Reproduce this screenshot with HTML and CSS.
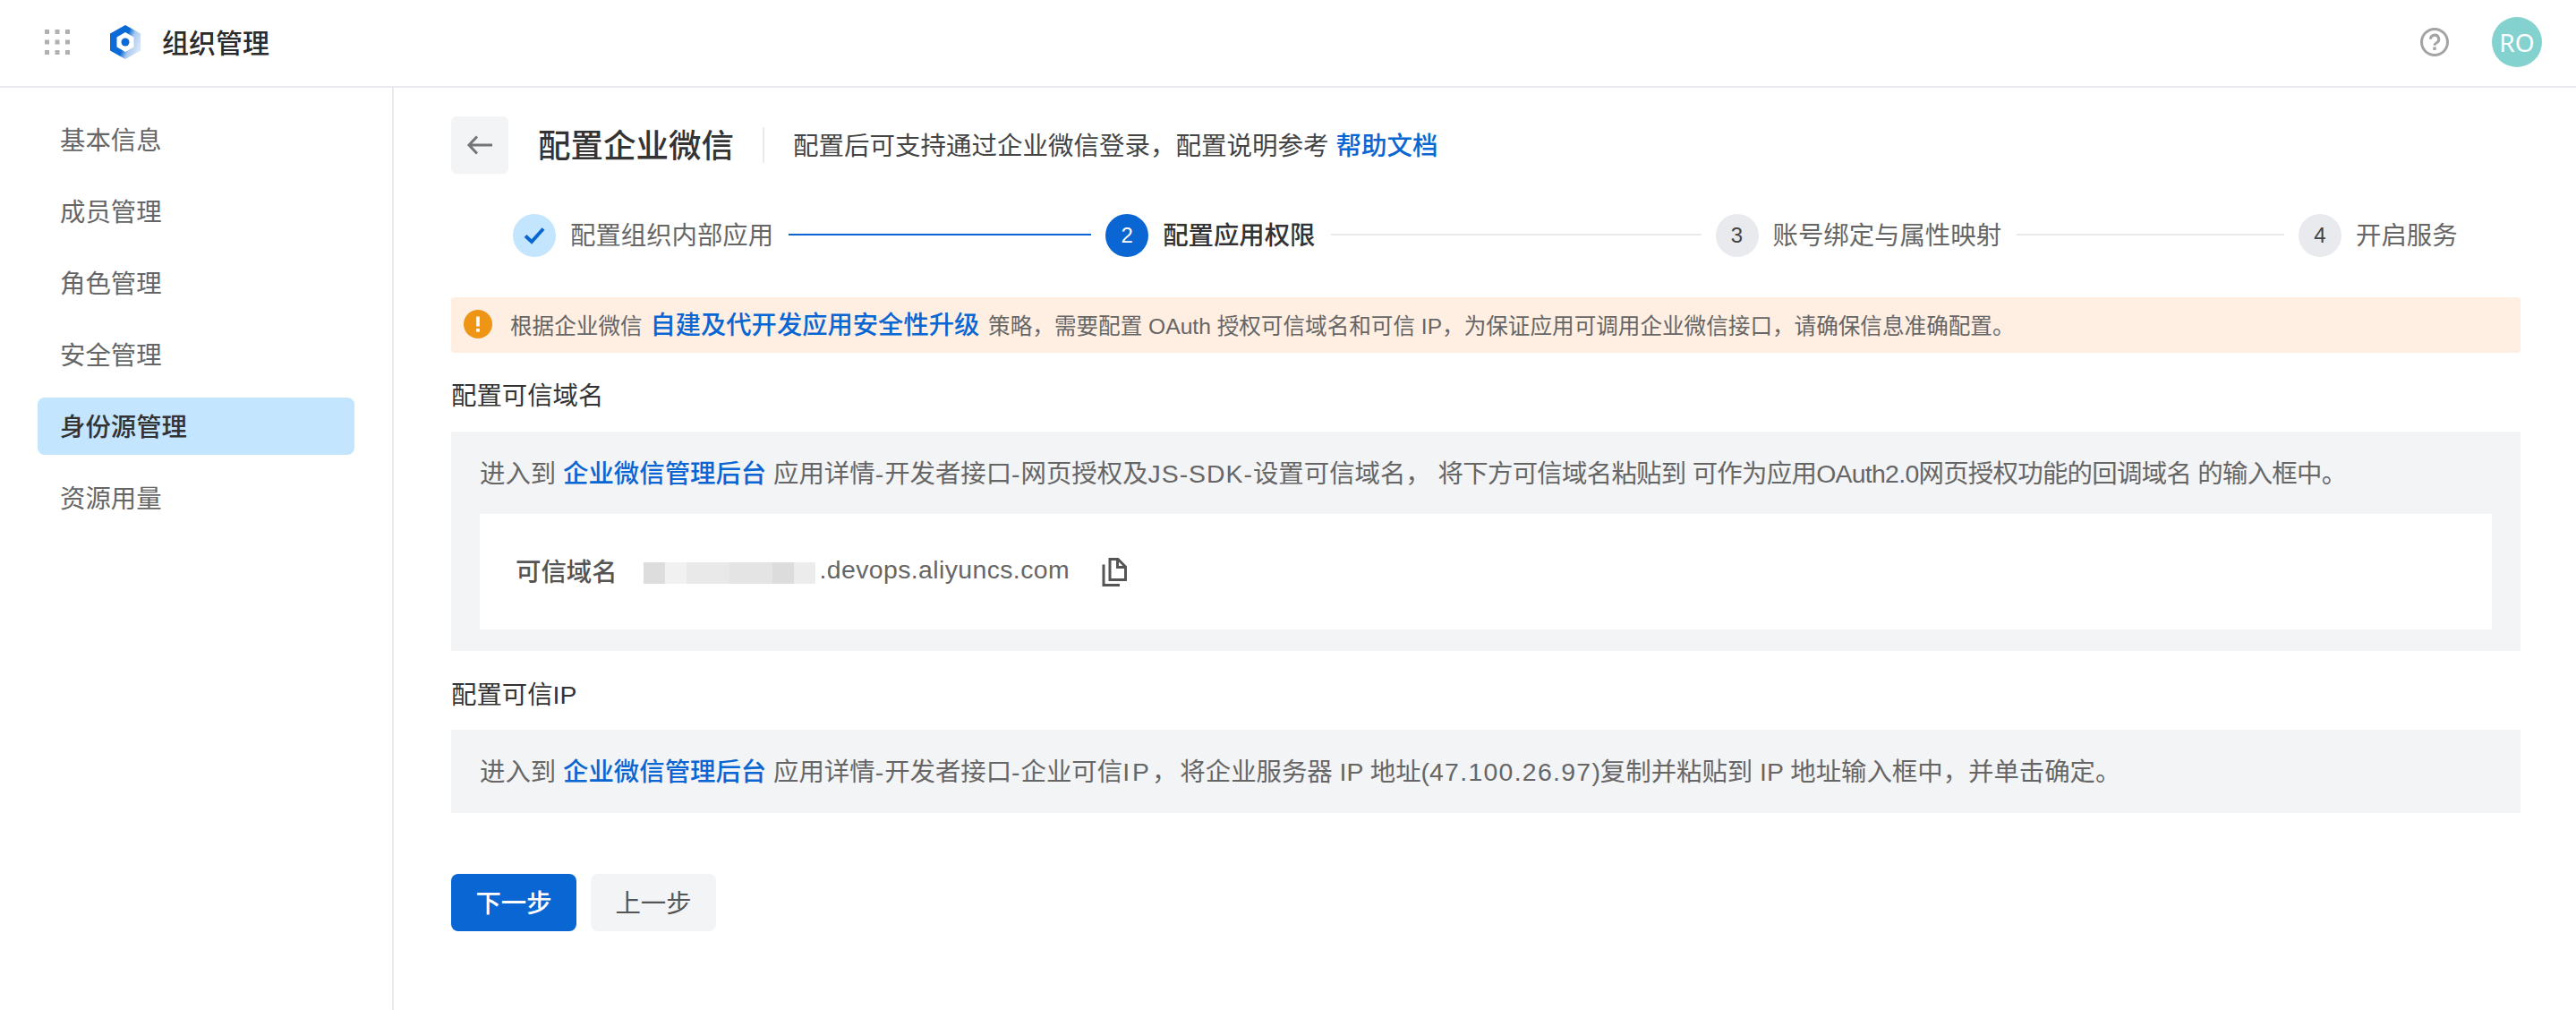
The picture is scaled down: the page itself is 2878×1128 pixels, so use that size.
FILE: index.html
```html
<!DOCTYPE html>
<html lang="zh-CN">
<head>
<meta charset="utf-8">
<title>组织管理</title>
<link rel="stylesheet" href="styles.css">
</head>
<body>
<header class="topbar">
  <div class="topbar-left">
    <svg class="grid-icon" width="28" height="28" viewBox="0 0 28 28"><g fill="#b0b0b0"><rect x="0" y="0" width="5" height="5"/><rect x="11.5" y="0" width="5" height="5"/><rect x="23" y="0" width="5" height="5"/><rect x="0" y="11.5" width="5" height="5"/><rect x="11.5" y="11.5" width="5" height="5"/><rect x="23" y="11.5" width="5" height="5"/><rect x="0" y="23" width="5" height="5"/><rect x="11.5" y="23" width="5" height="5"/><rect x="23" y="23" width="5" height="5"/></g></svg>
    <svg class="logo" width="34" height="38" viewBox="0 0 34 38">
      <defs><linearGradient id="hexg" x1="0.25" y1="0.35" x2="0.95" y2="0.65"><stop offset="0.35" stop-color="#0a6ad6"/><stop offset="0.62" stop-color="#a9c9ef"/><stop offset="1" stop-color="#d6e4f7"/></linearGradient></defs>
      <path d="M17 0 34 9.5V28.500L17 38 0 28.500V9.500Z" fill="url(#hexg)"/>
      <path d="M17 8 26.500 13.500V24.500L17 30 7.500 24.500V13.500Z" fill="#fff"/>
      <circle cx="17" cy="19" r="4.500" fill="#0a6ad6"/>
    </svg>
    <span class="app-name">组织管理</span>
  </div>
  <div class="topbar-right">
    <svg class="help" width="32" height="32" viewBox="0 0 32 32"><circle cx="16" cy="16" r="14.500" fill="none" stroke="#a3a3a3" stroke-width="3"/><path d="M11.500 12.800a4.600 4.600 0 1 1 6.800 4c-1.500.8-2.300 1.500-2.300 3" fill="none" stroke="#a3a3a3" stroke-width="3"/><rect x="14.300" y="21.500" width="3.400" height="3.400" fill="#a3a3a3"/></svg>
    <div class="avatar">RO</div>
  </div>
</header>
<div class="layout">
  <nav class="sidebar">
    <a class="nav-item">基本信息</a>
    <a class="nav-item">成员管理</a>
    <a class="nav-item">角色管理</a>
    <a class="nav-item">安全管理</a>
    <a class="nav-item active">身份源管理</a>
    <a class="nav-item">资源用量</a>
  </nav>
  <main class="main">
    <div class="title-row">
      <button class="back"><svg width="30" height="26" viewBox="0 0 30 26"><path d="M29 13H3M12 3.500 3 13 12 22.500" fill="none" stroke="#757575" stroke-width="3"/></svg></button>
      <h1 class="title">配置企业微信</h1>
      <span class="title-divider"></span>
      <p class="subtitle">配置后可支持通过企业微信登录，配置说明参考 <a class="link strong">帮助文档</a></p>
    </div>
    <ol class="steps">
      <li class="step done">
        <span class="dot"><svg width="24" height="20" viewBox="0 0 24 20"><path d="M2 10.500 9 17 22 2.500" fill="none" stroke="#0a66d2" stroke-width="4"/></svg></span>
        <span class="label">配置组织内部应用</span>
      </li>
      <li class="line line-a on"></li>
      <li class="step current">
        <span class="dot">2</span>
        <span class="label">配置应用权限</span>
      </li>
      <li class="line line-b"></li>
      <li class="step">
        <span class="dot">3</span>
        <span class="label">账号绑定与属性映射</span>
      </li>
      <li class="line line-c"></li>
      <li class="step">
        <span class="dot">4</span>
        <span class="label">开启服务</span>
      </li>
    </ol>
    <div class="alert">
      <svg class="alert-icon" width="32" height="32" viewBox="0 0 32 32"><circle cx="16" cy="16" r="16" fill="#ee9516"/><rect x="14.200" y="7.500" width="3.600" height="11" fill="#fff"/><rect x="14.200" y="21" width="3.600" height="3.600" fill="#fff"/></svg>
      <p class="alert-text">根据企业微信 <a class="link alert-link">自建及代开发应用安全性升级</a> 策略，需要配置 OAuth 授权可信域名和可信 IP，为保证应用可调用企业微信接口，请确保信息准确配置。</p>
    </div>
    <h2 class="section-label first">配置可信域名</h2>
    <section class="panel">
      <p class="panel-text">进入到 <a class="link strong">企业微信管理后台</a> 应用详情<span class="latin">-</span>开发者接口<span class="latin">-</span>网页授权及<span class="latin">JS-SDK-</span>设置可信域名， <span class="tail">将下方可信域名粘贴到 可作为应用OAuth2.0网页授权功能的回调域名 的输入框中。</span></p>
      <div class="domain-card">
        <span class="domain-key">可信域名</span>
        <span class="domain-value"><span class="mosaic"></span>.devops.aliyuncs.com</span>
        <svg class="copy" width="28" height="32" viewBox="0 0 28 32"><g fill="none" stroke="#555" stroke-width="3"><path d="M9 1.500H18L26.500 10V24.500H9Z"/><path d="M17.500 1.500V10.500H26.500"/><path d="M2 7.500V30.500H20"/></g></svg>
      </div>
    </section>
    <h2 class="section-label">配置可信IP</h2>
    <section class="panel">
      <p class="panel-text">进入到 <a class="link strong">企业微信管理后台</a> 应用详情<span class="latin">-</span>开发者接口<span class="latin">-</span>企业可信<span class="wide">IP，</span>将企业服务器 IP 地址(<span class="num">47.100.26.97</span>)复制并粘贴到 IP 地址输入框中，并单击确定。</p>
    </section>
    <div class="actions">
      <button class="btn primary">下一步</button>
      <button class="btn">上一步</button>
    </div>
  </main>
</div>
</body>
</html>
```
FILE: styles.css
```css
* { box-sizing: border-box; }
html, body { height: 100%; }
body {
  margin: 0;
  background: #fff;
  color: #333;
  font-family: "Liberation Sans", "Noto Sans CJK SC", sans-serif;
  font-size: 28.4px;
  display: flex;
  flex-direction: column;
  overflow: hidden;
}
p, h1, h2, ol { margin: 0; padding: 0; font-weight: 400; }
ol { list-style: none; }
button { font-family: inherit; border: 0; padding: 0; }

.topbar {
  height: 98px;
  flex: none;
  display: flex;
  align-items: center;
  justify-content: space-between;
  border-bottom: 2px solid #e8eaee;
  padding: 0 38px 2px 50px;
}
.topbar-left, .topbar-right { display: flex; align-items: center; }
.logo { margin-left: 45px; }
.app-name { margin-left: 24px; margin-bottom: 2px; font-size: 30px; font-weight: 500; color: #2b2b2b; }
.avatar {
  width: 56px; height: 56px; border-radius: 50%;
  margin-left: 48px;
  background: #84d2d0; color: #fff;
  font-family: "Noto Sans", sans-serif;
  font-size: 28px; line-height: 56px; text-align: center;
}

.layout { flex: 1; display: flex; min-height: 0; }
.sidebar {
  width: 440px; flex: none;
  border-right: 2px solid #e8eaee;
  padding: 26px 42px 0 42px;
  display: flex; flex-direction: column; gap: 16px;
}
.nav-item {
  height: 64px; line-height: 66px;
  padding-left: 25px;
  border-radius: 8px;
  color: #666;
}
.nav-item.active { background: #c4e5fe; color: #333; font-weight: 500; }

.main { flex: 1; padding: 32px 62px 0 64px; min-width: 0; }
.title-row { display: flex; align-items: center; height: 64px; }
.back {
  width: 64px; height: 64px; border-radius: 6px; background: #f3f4f6;
  display: flex; align-items: center; justify-content: center;
}
.title { margin: 0 0 3px 33px; font-size: 36.5px; font-weight: 500; color: #333; }
.title-divider { width: 2px; height: 40px; background: #e8eaee; margin: 0 32px 0 32px; }
.subtitle { color: #444; margin-bottom: 3px; font-size: 28.5px; }
.link { color: #0a66d2; }
.strong { font-weight: 500; }

.steps { display: flex; align-items: center; margin: 45px 0 45px 69px; height: 48px; }
.step { display: flex; align-items: center; flex: none; color: #666; }
.dot {
  width: 48px; height: 48px; border-radius: 50%;
  background: #e8eaee; color: #444;
  display: flex; align-items: center; justify-content: center;
  font-size: 24px; margin-right: 16px;
}
.label { margin-bottom: 5px; }
.step.done .dot { background: #c4e5fe; }
.step.current { color: #333; font-weight: 500; }
.step.current .dot { background: #0a66d2; color: #fff; font-weight: 400; }
.line { height: 2px; background: #e8eaee; margin: 0 16px 2px 17px; flex: none; }
.line.on { background: #0a66d2; }
.line-a { width: 338px; }
.line-b { width: 414px; }
.line-c { width: 299px; }

.alert {
  height: 62px; border-radius: 4px; background: #ffeee2;
  display: flex; align-items: center; padding-left: 14px;
}
.alert-icon { margin-top: -2px; }
.alert-text { margin: 0 0 5px 20px; font-size: 24.6px; color: #666; }
.alert-link { font-size: 28.3px; font-weight: 500; margin: 0 3px 0 2px; }

.section-label { font-size: 28.4px; line-height: 40px; margin: 29px 0 19px; color: #333; }
.section-label.first { margin: 28px 0 20px; }
.panel { background: #f3f4f6; padding: 25px 32px 24px; }
.panel-text { line-height: 44px; color: #666; white-space: nowrap; }
.latin { letter-spacing: 1px; }
.tail { letter-spacing: -.7px; }
.wide { letter-spacing: 3px; }
.num { letter-spacing: 1.3px; }
.domain-card {
  margin-top: 23px; height: 129px; background: #fff;
  display: flex; align-items: center; padding-left: 40px;
}
.domain-key { color: #555; font-weight: 500; margin-bottom: 4px; }
.domain-value { display: flex; align-items: center; margin-left: 29px; margin-bottom: 4px; color: #666; letter-spacing: .4px; }
.mosaic {
  width: 197px; height: 24px; margin-top: 6px;
  background: linear-gradient(90deg, #ddd 0 24px, #f1f1f1 24px 48px, #e9e9e9 48px 96px, #e4e4e4 96px 144px, #dcdcdc 144px 168px, #ececec 168px 192px, #fff 192px);
}
.copy { margin-left: 36px; }

.actions { display: flex; gap: 16px; margin-top: 68px; }
.btn {
  width: 140px; height: 64px; border-radius: 8px;
  background: #f3f4f6; color: #555; font-size: 28.4px; padding-bottom: 4px;
}
.btn.primary { background: #0a66d2; color: #fff; font-weight: 500; }
```
